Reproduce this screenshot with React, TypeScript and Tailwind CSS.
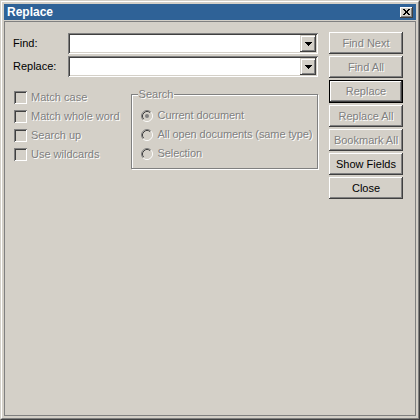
const raised =
  "shadow-[inset_-1px_-1px_0_#404040,inset_1px_1px_0_#fff,inset_-2px_-2px_0_#808080]";
const sunken =
  "shadow-[inset_1px_1px_0_#808080,inset_-1px_-1px_0_#fff,inset_2px_2px_0_#404040,inset_-2px_-2px_0_#d4d0c8]";
const grayText = "text-[#808080] [text-shadow:1px_1px_0_#fff]";

const buttons = [
  { label: "Find Next", enabled: false },
  { label: "Find All", enabled: false },
  { label: "Replace", enabled: false, isDefault: true },
  { label: "Replace All", enabled: false },
  { label: "Bookmark All", enabled: false },
  { label: "Show Fields", enabled: true },
  { label: "Close", enabled: true },
];

const options = ["Match case", "Match whole word", "Search up", "Use wildcards"];
const scopes = ["Current document", "All open documents (same type)", "Selection"];

function Combo() {
  return (
    <div className={`w-[250px] h-[21px] bg-white flex justify-end items-center pr-[2px] ${sunken}`}>
      <div
        className={`w-[16px] h-[17px] bg-[#d4d0c8] flex items-center justify-center shadow-[inset_-1px_-1px_0_#404040,inset_1px_1px_0_#d4d0c8,inset_2px_2px_0_#fff,inset_-2px_-2px_0_#808080]`}
      >
        <svg width="7" height="4" viewBox="0 0 7 4" shapeRendering="crispEdges">
          <rect x="0" y="0" width="7" height="1" fill="#000" />
          <rect x="1" y="1" width="5" height="1" fill="#000" />
          <rect x="2" y="2" width="3" height="1" fill="#000" />
          <rect x="3" y="3" width="1" height="1" fill="#000" />
        </svg>
      </div>
    </div>
  );
}

function Radio({ checked }: { checked?: boolean }) {
  return (
    <svg width="12" height="12" viewBox="0 0 12 12">
      <circle cx="6" cy="6" r="5" fill="#d4d0c8" />
      <path d="M2.11 9.89A5.5 5.5 0 0 1 9.89 2.11" stroke="#808080" fill="none" />
      <path d="M9.89 2.11A5.5 5.5 0 0 1 2.11 9.89" stroke="#fff" fill="none" />
      <path d="M2.82 9.18A4.5 4.5 0 0 1 9.18 2.82" stroke="#404040" fill="none" />
      <path d="M9.18 2.82A4.5 4.5 0 0 1 2.82 9.18" stroke="#d4d0c8" fill="none" />
      {checked && <circle cx="6" cy="6" r="2" fill="#808080" />}
    </svg>
  );
}

export default function App() {
  return (
    <div className="w-[420px] h-[420px] bg-[#d4d0c8] font-['Liberation_Sans',Arial,sans-serif] text-[11px] leading-[13px] text-black border border-t-[#d4d0c8] border-l-[#d4d0c8] border-r-[#404040] border-b-[#404040]">
      <div className="h-full flex flex-col p-[2px] border border-t-white border-l-white border-r-[#808080] border-b-[#808080]">
        {/* title bar */}
        <div className="h-[16px] bg-[#2f6297] flex items-center justify-between pl-[3px] pr-[3px]">
          <span className="text-white font-bold text-[12px] leading-[16px]">Replace</span>
          <div className={`w-[13px] h-[11px] bg-[#d4d0c8] flex items-center justify-center ${raised}`}>
            <svg width="7" height="6" viewBox="0 0 7 6" shapeRendering="crispEdges">
              <path d="M0 0h2l1.5 2L5 0h2L4.5 3L7 6H5L3.5 4L2 6H0l2.5-3z" fill="#000" />
            </svg>
          </div>
        </div>

        {/* client frame */}
        <div className="mt-[1px] flex-1 border border-[#808080] flex pl-[8px] pt-[10px]">
          <div className="w-[305px] pt-[1px] flex flex-col">
            <div className="flex flex-col gap-[2px]">
              <div className="flex items-center">
                <span className="w-[55px]">Find:</span>
                <Combo />
              </div>
              <div className="flex items-center">
                <span className="w-[55px]">Replace:</span>
                <Combo />
              </div>
            </div>

            <div className="flex mt-[11px]">
              <div className="w-[118px] flex flex-col">
                {options.map((o) => (
                  <div key={o} className="h-[19px] flex items-center gap-[4px]">
                    <div className={`ml-[1px] w-[13px] h-[13px] bg-[#d4d0c8] ${sunken}`} />
                    <span className={grayText}>{o}</span>
                  </div>
                ))}
              </div>

              <div className="relative mt-[6px] w-[188px] h-[75px] border border-[#808080] shadow-[inset_1px_1px_0_#fff,1px_1px_0_#fff] pl-[9px] pt-[11px]">
                <span className={`absolute -top-[7px] left-[6px] px-[1px] bg-[#d4d0c8] ${grayText}`}>
                  Search
                </span>
                {scopes.map((s, i) => (
                  <div key={s} className="h-[19px] flex items-center gap-[5px]">
                    <Radio checked={i === 0} />
                    <span className={`${grayText} tracking-[-0.1px]`}>{s}</span>
                  </div>
                ))}
              </div>
            </div>
          </div>

          <div className="ml-[11px] flex flex-col gap-[2px]">
            {buttons.map((b) =>
              b.isDefault ? (
                <div key={b.label} className="w-[74px] h-[23px] border border-black">
                  <div className={`h-full flex items-center justify-center ${raised} ${grayText}`}>
                    {b.label}
                  </div>
                </div>
              ) : (
                <div
                  key={b.label}
                  className={`w-[74px] h-[22px] flex items-center justify-center ${raised} ${
                    b.enabled ? "text-black" : grayText
                  }`}
                >
                  {b.label}
                </div>
              )
            )}
          </div>
        </div>
      </div>
    </div>
  );
}
